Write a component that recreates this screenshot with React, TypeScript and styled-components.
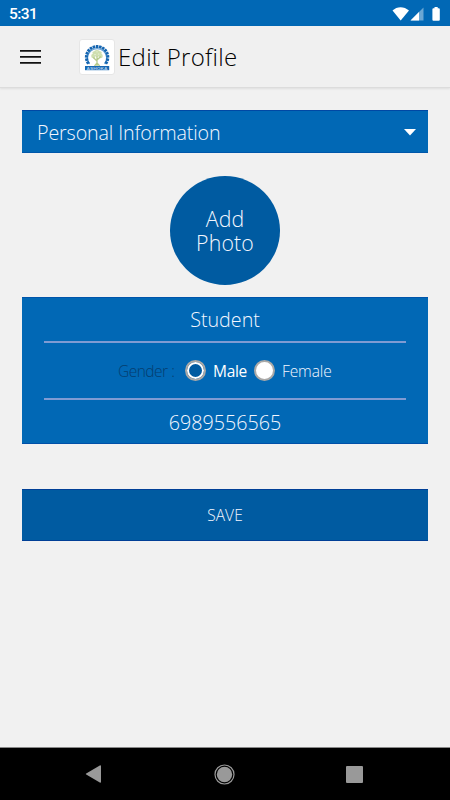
import React from "react";
import styled, { createGlobalStyle } from "styled-components";

const GlobalStyle = createGlobalStyle`
  *, *::before, *::after { box-sizing: border-box; }
  body { margin: 0; background: #f1f1f1; }
  button { font: inherit; border: 0; padding: 0; background: none; }
`;

const Screen = styled.div`
  width: 450px;
  height: 800px;
  display: flex;
  flex-direction: column;
  background: #f1f1f1;
  font-family: "Open Sans", "Noto Sans", sans-serif;
  font-weight: 300;
  overflow: hidden;
`;

const StatusBar = styled.div`
  height: 26px;
  flex: none;
  display: flex;
  align-items: center;
  justify-content: space-between;
  padding: 1px 9px 0 9px;
  background: #0168b5;
  color: #fff;
  font: 500 15.5px/26px Roboto, sans-serif;
  letter-spacing: -0.6px;
`;

const Header = styled.header`
  height: 62px;
  flex: none;
  display: flex;
  align-items: center;
  padding-left: 20px;
  background: #f0f0f0;
  border-bottom: 1px solid #dcdcdc;
  box-shadow: 0 1px 2px rgba(0, 0, 0, 0.08);
`;

const MenuButton = styled.button`
  display: flex;
  width: 21px;
  margin-right: 38px;
`;

const LogoTile = styled.div`
  width: 36px;
  height: 36px;
  border-radius: 3px;
  border: 1px solid #e6e6e6;
  background: #fff;
`;

const Text = styled.span<{ $size: number; $spacing?: number; $color?: string; $weight?: number }>`
  font-size: ${(p) => p.$size}px;
  letter-spacing: ${(p) => p.$spacing ?? 0}px;
  color: ${(p) => p.$color ?? "#f4f7ff"};
  font-weight: ${(p) => p.$weight ?? 300};
  white-space: nowrap;
`;

const Title = styled.h1`
  margin: 0 0 0 3px;
  font-size: 24px;
  line-height: 32px;
  font-weight: 300;
  letter-spacing: 0.3px;
  color: #000;
  white-space: nowrap;
`;

const Main = styled.main`
  flex: 1;
  display: flex;
  flex-direction: column;
  align-items: center;
  padding: 22px 22px 0;
`;

const SectionSelect = styled.button`
  width: 100%;
  height: 43px;
  display: flex;
  align-items: center;
  justify-content: space-between;
  padding: 1px 12px 0 15px;
  background: #0168b5;
  border-top: 1px solid #0048a4;
  border-bottom: 1px solid #0057aa;
`;

const PhotoButton = styled.button`
  width: 110px;
  height: 109px;
  margin: 23px 0 12px;
  border-radius: 50%;
  background: #005ba1;
  display: flex;
  flex-direction: column;
  align-items: center;
  justify-content: center;
  line-height: 24px;
`;

const Card = styled.section`
  width: 100%;
  height: 147px;
  padding: 0 22px;
  background: #0168b5;
  border-top: 1px solid #0055ab;
  border-bottom: 1px solid #0050a8;
`;

const Field = styled.div<{ $height: number; $last?: boolean }>`
  height: ${(p) => p.$height}px;
  display: flex;
  align-items: center;
  justify-content: center;
  border-bottom: ${(p) => (p.$last ? "0" : "2px solid #7f9bd3")};
`;

const GenderRow = styled(Field)`
  justify-content: flex-start;
  padding-left: 74px;
`;

const GenderLabel = styled.div`
  width: 67px;
  display: flex;
`;

const Option = styled.label<{ $width: number }>`
  width: ${(p) => p.$width}px;
  display: flex;
  align-items: center;
  gap: 7px;
`;

const Radio = styled.span<{ $checked?: boolean }>`
  width: 21px;
  height: 21px;
  flex: none;
  border-radius: 50%;
  border: 2px solid #aaa9a7;
  background: ${(p) => (p.$checked ? "#005ba1" : "#fff")};
  box-shadow: inset 0 0 0 2px #fff;
`;

const SaveButton = styled.button`
  width: 100%;
  height: 52px;
  margin-top: 45px;
  background: #005ba1;
  border-top: 1px solid #003f96;
  border-bottom: 1px solid #003f96;
`;

const NavBar = styled.nav`
  height: 53px;
  flex: none;
  display: flex;
  align-items: center;
  justify-content: space-between;
  padding: 0 87px 0 85px;
  background: #000;
  border-top: 1px solid #888;
`;

const teeth = Array.from({ length: 15 }, (_, i) => -210 + i * (240 / 14));

function Logo() {
  return (
    <svg width="34" height="34" viewBox="0 0 34 34" aria-label="Ashoka">
      <path d="M9.5 24A9.6 9.6 0 1 1 24.7 24" fill="none" stroke="#65a0d4" strokeWidth="1.3" />
      {teeth.map((a) => (
        <rect key={a} x="9.2" y="-1.3" width="3" height="2.6" fill="#1465b1" transform={`translate(17.1 17.2) rotate(${a})`} />
      ))}
      <g fill="#cfdfb0">
        <circle cx="17" cy="13.2" r="3.2" />
        <circle cx="13.4" cy="16" r="2.2" />
        <circle cx="20.6" cy="16" r="2.2" />
        <circle cx="14" cy="12.8" r="1.6" />
        <circle cx="20.2" cy="12.8" r="1.6" />
      </g>
      <path d="M17 26V16M17 21l-3.7-3.5M17 20l3.8-3.4M14.5 26l2.5-3 2.7 3" fill="none" stroke="#b7cb8c" strokeWidth="1.3" />
      <g fill="#f7faef">
        <circle cx="15" cy="14.6" r=".6" />
        <circle cx="18.8" cy="14" r=".6" />
        <circle cx="17" cy="11.7" r=".5" />
      </g>
      <rect x="5" y="26" width="24.2" height="4.2" fill="#1768b3" />
      <text x="17.1" y="29.8" textAnchor="middle" textLength="21" lengthAdjust="spacingAndGlyphs" fontFamily="Liberation Sans, sans-serif" fontWeight="700" fontSize="4.4" fill="#a9cbea">ASHOKA</text>
    </svg>
  );
}

export default function App() {
  return (
    <>
      <GlobalStyle />
      <Screen>
        <StatusBar>
          <span>5:31</span>
          <svg width="49" height="16" viewBox="0 0 49 16" fill="#fff">
            <path d="M.5 4.5C5 0 12 0 17 4.5L8.7 14.5z" />
            <path d="M18.5 14.5L31.5 1.5v13z" opacity=".42" />
            <path d="M18.5 14.5L27 6v8.5z" />
            <path d="M42.5 1h3.2v1.3h1.1q1 0 1 1v10.4q0 1-1 1h-5.4q-1 0-1-1V3.3q0-1 1-1h1.1z" />
          </svg>
        </StatusBar>
        <Header>
          <MenuButton aria-label="Menu">
            <svg width="21" height="16" viewBox="0 0 21 16" fill="#111">
              <path d="M0 1h21v1.8H0zM0 7h21v1.8H0zM0 13h21v1.8H0z" />
            </svg>
          </MenuButton>
          <LogoTile><Logo /></LogoTile>
          <Title>Edit Profile</Title>
        </Header>
        <Main>
          <SectionSelect>
            <Text $size={19.7} $spacing={-0.13}>Personal Information</Text>
            <svg width="12" height="7" viewBox="0 0 12 7"><path d="M0 0h12L6 6.5z" fill="#fff" /></svg>
          </SectionSelect>
          <PhotoButton>
            <Text $size={21.3} $spacing={0.15}>Add</Text>
            <Text $size={21.3} $spacing={0.15}>Photo</Text>
          </PhotoButton>
          <Card>
            <Field $height={45}><Text $size={19.7}>Student</Text></Field>
            <GenderRow $height={57}>
              <GenderLabel><Text $size={15.5} $spacing={-0.5} $color="#053d6e">Gender :</Text></GenderLabel>
              <Option $width={69}><Radio $checked /><Text $size={15.5} $weight={500} $color="#fff" $spacing={-0.3}>Male</Text></Option>
              <Option $width={80}><Radio /><Text $size={15.5} $spacing={-0.1}>Female</Text></Option>
            </GenderRow>
            <Field $height={45} $last><Text $size={19.7}>6989556565</Text></Field>
          </Card>
          <SaveButton><Text $size={15.5} $spacing={0.1}>SAVE</Text></SaveButton>
        </Main>
        <NavBar>
          <svg width="17" height="18" viewBox="0 0 17 18"><path d="M1.2 8.4L14.8.4q1.2-.4 1.2.8v15.6q0 1.2-1.2.8L1.2 9.6q-.8-.6 0-1.2z" fill="#999" /></svg>
          <svg width="21" height="21" viewBox="0 0 21 21"><circle cx="10.5" cy="10.5" r="9.5" fill="none" stroke="#999" strokeWidth="1.2" /><circle cx="10.5" cy="10.5" r="7.7" fill="#999" /></svg>
          <svg width="17" height="17" viewBox="0 0 17 17"><rect width="17" height="17" rx="1" fill="#999" /></svg>
        </NavBar>
      </Screen>
    </>
  );
}
